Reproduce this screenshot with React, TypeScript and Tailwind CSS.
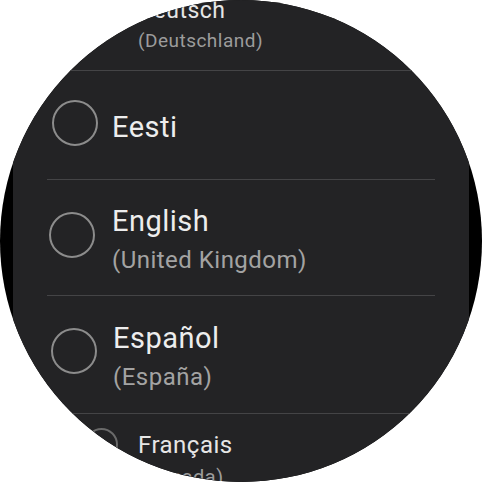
import React from "react";

function Radio({ size, className }: { size: number; className: string }) {
  return (
    <div
      className={`shrink-0 rounded-full border-2 ${className}`}
      style={{ width: size, height: size }}
    />
  );
}

function Divider() {
  return <div className="h-px w-full bg-[#444446]" />;
}

export default function App() {
  return (
    <div
      className="w-[482px] h-[482px] bg-white tracking-[0.03em]"
      style={{ fontFamily: "Roboto, 'Noto Sans', sans-serif" }}
    >
      <div className="w-[482px] h-[482px] rounded-full bg-black overflow-hidden">
        <div className="mx-[13px] h-full bg-[#232325] px-[34px] overflow-hidden">
          {/* Deutsch (curved, scaled) */}
          <div className="h-[70px] flex items-start">
            <Radio size={34} className="ml-[36px] mt-[8px] border-[#6a6a6a]" />
            <div className="ml-[21px] -mt-[3px] flex flex-col">
              <div className="text-[23px] leading-[27px] text-[#e6e6e6]">Deutsch</div>
              <div className="mt-[6px] text-[19px] leading-[22px] text-[#9c9c9c]">(Deutschland)</div>
            </div>
          </div>
          <Divider />
          {/* Eesti */}
          <div className="h-[108px] flex items-start">
            <Radio size={46} className="ml-[5px] mt-[29px] border-[#8c8c8c]" />
            <div className="ml-[14px] mt-[39px] flex flex-col">
              <div className="text-[29px] leading-[34px] text-[#ededed]">Eesti</div>
            </div>
          </div>
          <Divider />
          {/* English */}
          <div className="h-[115px] flex items-start">
            <Radio size={46} className="ml-[2px] mt-[32px] border-[#8c8c8c]" />
            <div className="ml-[17px] mt-[24px] flex flex-col">
              <div className="text-[29px] leading-[34px] text-[#ededed]">English</div>
              <div className="mt-[8px] text-[24px] leading-[28px] text-[#a3a3a3]">(United Kingdom)</div>
            </div>
          </div>
          <Divider />
          {/* Español */}
          <div className="h-[117px] flex items-start">
            <Radio size={46} className="ml-[4px] mt-[32px] border-[#8c8c8c]" />
            <div className="ml-[16px] mt-[25px] flex flex-col">
              <div className="text-[29px] leading-[34px] text-[#ededed]">Español</div>
              <div className="mt-[8px] text-[24px] leading-[28px] text-[#a3a3a3]">(España)</div>
            </div>
          </div>
          <Divider />
          {/* Français (curved, scaled) */}
          <div className="h-[80px] flex items-start">
            <Radio size={33} className="ml-[38px] mt-[14px] border-[#6a6a6a]" />
            <div className="ml-[20px] mt-[17px] flex flex-col">
              <div className="text-[24px] leading-[28px] text-[#e6e6e6]">Français</div>
              <div className="mt-[6px] text-[20px] leading-[24px] text-[#9c9c9c]">(Canada)</div>
            </div>
          </div>
        </div>
      </div>
    </div>
  );
}
